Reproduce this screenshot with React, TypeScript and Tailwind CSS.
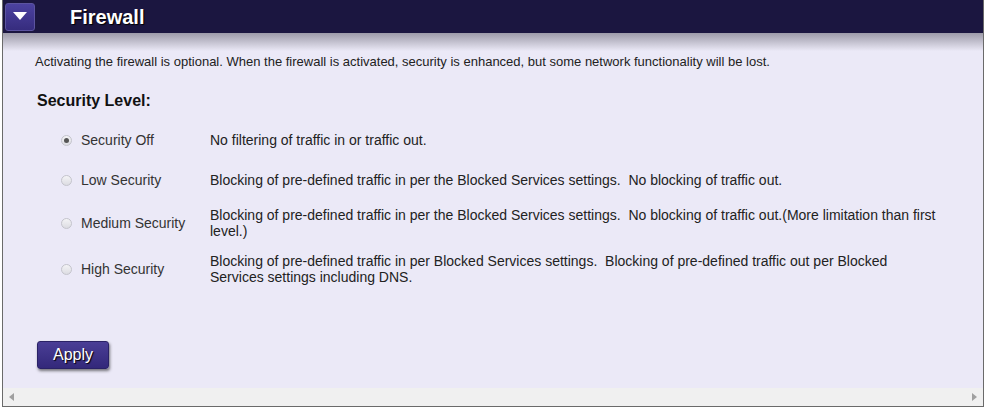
import React from 'react';

const levels = [
  { label: 'Security Off', desc: 'No filtering of traffic in or traffic out.', checked: true, h: 'h-[40px]' },
  {
    label: 'Low Security',
    desc: 'Blocking of pre-defined traffic in per the Blocked Services settings.\u00a0 No blocking of traffic out.',
    checked: false,
    h: 'h-[40px]',
  },
  {
    label: 'Medium Security',
    desc: 'Blocking of pre-defined traffic in per the Blocked Services settings.\u00a0 No blocking of traffic out.(More limitation than first level.)',
    checked: false,
    h: 'h-[46px]',
  },
  {
    label: 'High Security',
    desc: 'Blocking of pre-defined traffic in per Blocked Services settings.\u00a0 Blocking of pre-defined traffic out per Blocked Services settings including DNS.',
    checked: false,
    h: 'h-[46px]',
  },
];

function Radio({ checked }: { checked: boolean }) {
  return (
    <span className="w-[11px] h-[11px] rounded-full border border-[#c4c4cc] bg-gradient-to-b from-[#f4f4f6] to-[#dcdce2] flex items-center justify-center">
      {checked && <span className="w-[5px] h-[5px] rounded-full bg-[#555]" />}
    </span>
  );
}

export default function App() {
  return (
    <div className="w-[986px] h-[409px] bg-white font-['Liberation_Sans',Arial,sans-serif] pl-[2px] pr-[2px]">
      <div className="h-[407px] border-l border-r border-b border-[#6a6a6a] flex flex-col bg-[#ebe9f7]">
        {/* Header */}
        <div className="h-[33px] bg-[#1b1640] flex items-center pl-[2px]">
          <div className="w-[30px] h-[28px] rounded-[3px] border border-[#5c54a0] bg-gradient-to-b from-[#4c42a0] to-[#362c7e] flex items-center justify-center">
            <svg width="14" height="9" viewBox="0 0 14 9">
              <polygon points="0,0 14,0 7,8" fill="#ffffff" />
            </svg>
          </div>
          <span className="ml-[35px] text-white font-bold text-[20px] [text-shadow:1px_1px_1px_#000]">Firewall</span>
        </div>
        <div className="h-[18px] bg-gradient-to-b from-[#9d9ba9] to-[#ebe9f7]" />

        {/* Body */}
        <div className="flex-1 pl-[32px]">
          <p className="text-[13px] text-[#222] leading-[16px] mt-[3px]">
            Activating the firewall is optional. When the firewall is activated, security is enhanced, but some network functionality will be lost.
          </p>
          <h2 className="mt-[22px] text-[16px] font-bold text-[#111] leading-[18px] pl-[2px]">Security Level:</h2>

          <div className="mt-[10px] flex flex-col">
            {levels.map((l) => (
              <div key={l.label} className={`flex items-center ${l.h}`}>
                <div className="w-[175px] flex items-center pl-[26px] gap-[9px]">
                  <Radio checked={l.checked} />
                  <span className="text-[14px] text-[#333]">{l.label}</span>
                </div>
                <p className="w-[730px] text-[14px] text-[#222] leading-[16px]">{l.desc}</p>
              </div>
            ))}
          </div>

          <button className="mt-[49px] ml-[2px] w-[72px] h-[28px] rounded-[3px] bg-gradient-to-b from-[#4a3e96] to-[#33287a] border border-[#2a2266] text-white text-[16px] shadow-[1px_2px_3px_rgba(0,0,0,0.5)] [text-shadow:1px_1px_1px_#000]">
            Apply
          </button>
        </div>

        {/* Horizontal scrollbar */}
        <div className="h-[18px] bg-[#f0f0f0] flex items-center justify-between px-[6px]">
          <svg width="5" height="8" viewBox="0 0 5 8">
            <polygon points="5,0 0,4 5,8" fill="#a0a0a0" />
          </svg>
          <svg width="5" height="8" viewBox="0 0 5 8">
            <polygon points="0,0 5,4 0,8" fill="#a0a0a0" />
          </svg>
        </div>
      </div>
    </div>
  );
}
